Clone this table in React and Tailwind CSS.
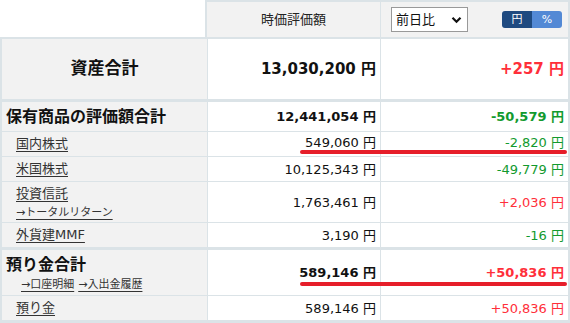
import React from "react";

const FONT = { fontFamily: '"DejaVu Sans", "Noto Sans CJK JP", sans-serif' };

function Row({ h, border = "border-b", label, c2, c3, labelClass = "" }) {
  return (
    <div className={`flex ${h} ${border} border-[#dbe3e7]`}>
      <div className={`w-[205px] shrink-0 bg-[#f2f2f2] flex flex-col justify-center ${labelClass}`}>{label}</div>
      <div className="w-[173px] shrink-0 border-l border-[#dbe3e7] flex items-center justify-end pr-[4px]">{c2}</div>
      <div className="flex-1 border-l border-[#dbe3e7] flex items-center justify-end pr-[4px]">{c3}</div>
    </div>
  );
}

const Link = ({ children, className = "" }) => (
  <span className={`text-[#333] underline decoration-1 underline-offset-[3px] ${className}`}>{children}</span>
);

const Num = ({ children, className = "" }) => (
  <span className={`text-[13px] leading-none whitespace-nowrap ${className}`}>{children}</span>
);

export default function App() {
  const green = "text-[#129a2e]";
  const red = "text-[#ff2f3a]";
  return (
    <div className="relative w-[570px] h-[323px] bg-white overflow-hidden text-[#111]" style={FONT}>
      {/* header */}
      <div className="flex h-[37px]">
        <div className="w-[205px] shrink-0 bg-white" />
        <div className="flex-1 flex border-t-2 border-l-2 border-r-2 border-[#dbe3e7] bg-[#f2f2f2]">
          <div className="w-[173px] shrink-0 flex items-center justify-center text-[13px] text-[#222] pt-[1px]">時価評価額</div>
          <div className="flex-1 border-l border-[#dbe3e7] flex items-center pl-[10px] pr-[6px]">
            <div className="w-[77px] h-[25px] border border-[#999] bg-white flex items-center pl-[4px] pr-[5px] justify-between">
              <span className="text-[13px] text-[#111]">前日比</span>
              <svg width="11" height="8" viewBox="0 0 11 8"><path d="M1.5 1.8 L5.5 5.8 L9.5 1.8" fill="none" stroke="#111" strokeWidth="2.2" /></svg>
            </div>
            <div className="ml-auto flex h-[17px] w-[60px] rounded-[3px] overflow-hidden text-[11px] text-white leading-none">
              <div className="w-1/2 bg-[#1f4a80] flex items-center justify-center">円</div>
              <div className="w-1/2 bg-[#5389d5] flex items-center justify-center">%</div>
            </div>
          </div>
        </div>
      </div>

      {/* body */}
      <div className="border-x-2 border-t-2 border-b-[3px] border-[#dbe3e7]">
        <Row
          h="h-[63px]"
          border="border-b-[3px]"
          labelClass="items-center"
          label={<span className="text-[17px] font-bold">資産合計</span>}
          c2={<Num className="text-[15px] font-bold">13,030,200 円</Num>}
          c3={<Num className={`text-[15px] font-bold ${red}`}>+257 円</Num>}
        />
        <Row
          h="h-[30px]"
          labelClass="pl-[4px]"
          label={<span className="text-[16px] font-bold leading-none">保有商品の評価額合計</span>}
          c2={<Num className="text-[12px] font-bold">12,441,054 円</Num>}
          c3={<Num className={`text-[12px] font-bold ${green}`}>-50,579 円</Num>}
        />
        <Row
          h="h-[25px]"
          labelClass="pl-[14px] text-[13px]"
          label={<Link>国内株式</Link>}
          c2={<Num className="pb-[3px]">549,060 円</Num>}
          c3={<Num className={`pb-[3px] ${green}`}>-2,820 円</Num>}
        />
        <Row
          h="h-[25px]"
          labelClass="pl-[14px] text-[13px]"
          label={<Link>米国株式</Link>}
          c2={<Num>10,125,343 円</Num>}
          c3={<Num className={green}>-49,779 円</Num>}
        />
        <Row
          h="h-[41px]"
          labelClass="pl-[14px] text-[13px]"
          label={
            <div className="flex flex-col leading-none gap-[7px] pt-[1px]">
              <Link>投資信託</Link>
              <Link className="text-[11px]">→トータルリターン</Link>
            </div>
          }
          c2={<Num>1,763,461 円</Num>}
          c3={<Num className={red}>+2,036 円</Num>}
        />
        <Row
          h="h-[27px]"
          border="border-b-[3px]"
          labelClass="pl-[14px] text-[13px]"
          label={<Link>外貨建MMF</Link>}
          c2={<Num>3,190 円</Num>}
          c3={<Num className={green}>-16 円</Num>}
        />
        <Row
          h="h-[46px]"
          labelClass="pl-[4px]"
          label={
            <div className="flex flex-col leading-none gap-[6px] pt-[2px]">
              <span className="text-[16px] font-bold">預り金合計</span>
              <div className="pl-[15px] text-[11px] flex gap-[4px]">
                <Link>→口座明細</Link>
                <Link>→入出金履歴</Link>
              </div>
            </div>
          }
          c2={<Num className="text-[12px] font-bold">589,146 円</Num>}
          c3={<Num className={`text-[12px] font-bold ${red}`}>+50,836 円</Num>}
        />
        <Row
          h="h-[24px]"
          border=""
          labelClass="pl-[14px] text-[13px]"
          label={<Link>預り金</Link>}
          c2={<Num>589,146 円</Num>}
          c3={<Num className={red}>+50,836 円</Num>}
        />
      </div>

      {/* annotation underlines */}
      <div className="absolute left-[300px] top-[150px] w-[267px] h-[4px] rounded-full bg-[#e61e2a]" />
      <div className="absolute left-[300px] top-[282px] w-[267px] h-[4px] rounded-full bg-[#e61e2a]" />
    </div>
  );
}
